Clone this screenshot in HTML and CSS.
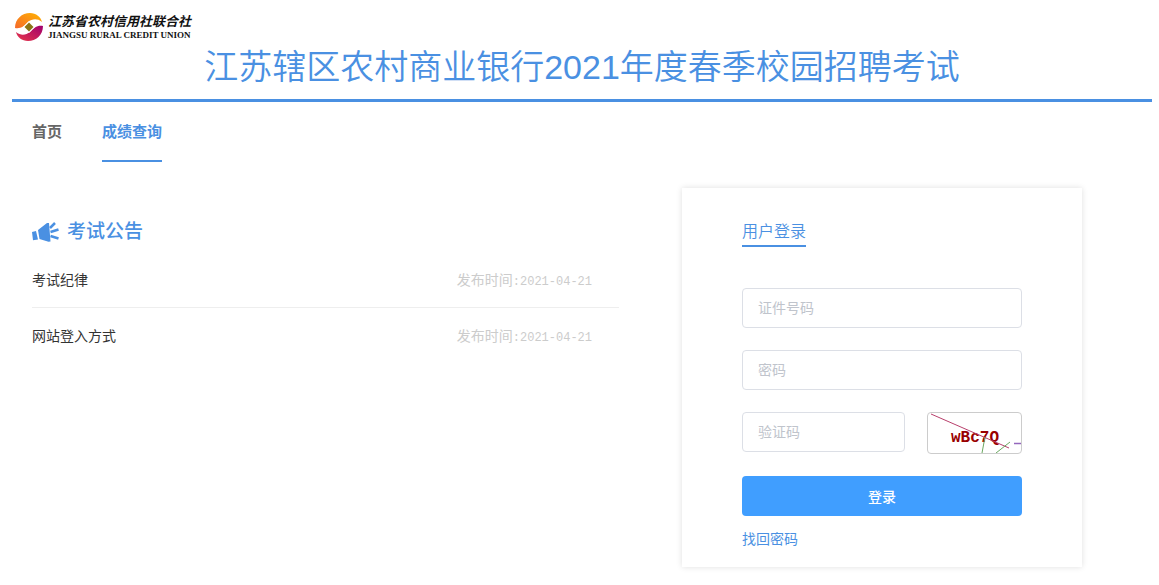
FILE: index.html
```html
<!DOCTYPE html>
<html lang="zh-CN">
<head>
    <meta charset="UTF-8">
    <meta name="viewport" content="width=device-width, initial-scale=1.0">
    <title>江苏辖区农村商业银行2021年度春季校园招聘考试</title>
    <link rel="stylesheet" href="styles.css">
</head>
<body>
    <header class="header">
        <div class="logo">
            <svg class="logo-mark" viewBox="0 0 28 28" aria-hidden="true">
                <defs>
                    <linearGradient id="orange" x1="0" y1="1" x2="1" y2="0">
                        <stop offset="0" stop-color="#f5692b"/>
                        <stop offset="1" stop-color="#ffb400"/>
                    </linearGradient>
                    <linearGradient id="purple" x1="0" y1="1" x2="1" y2="0">
                        <stop offset="0" stop-color="#e8384a"/>
                        <stop offset="1" stop-color="#a0006e"/>
                    </linearGradient>
                </defs>
                <path fill="url(#orange)" d="M0 15C0 6 7 0 15 0c6 0 11 4 12 9-5-4-10-3-14 0-4 4-7 7-13 6z"/>
                <path fill="url(#purple)" d="M28 13c0 9-7 15-15 15-6 0-11-4-12-9 5 4 10 3 14 0 4-4 7-7 13-6z"/>
                <path fill="#fff" d="M14 8l6 6-6 6-6-6z"/>
                <path fill="#8a7416" d="M14 9.500l4.500 4.500-4.500 4.500L9.500 14z"/>
            </svg>
            <div class="logo-text">
                <span class="logo-cn">江苏省农村信用社联合社</span>
                <span class="logo-en">JIANGSU RURAL CREDIT UNION</span>
            </div>
        </div>
        <h1>江苏辖区农村商业银行2021年度春季校园招聘考试</h1>
    </header>

    <nav class="nav">
        <a href="#">首页</a>
        <a href="#" class="active">成绩查询</a>
    </nav>

    <main class="main">
        <section class="notice">
            <h2>
                <svg class="horn" viewBox="0 0 27 20" aria-hidden="true">
                    <path d="M0 10l4-1 2 8.500-5 .8zM6 8L15 1l2 0 1.500 18.500-2 .3L7.500 17z"/>
                    <path d="M18 6l5-5M18.500 10l8-2.500M18.500 14l8 2.500" fill="none" stroke="#4a90e2" stroke-width="2.500"/>
                </svg>
                考试公告
            </h2>
            <ul class="notice-list">
                <li>
                    <a href="#">考试纪律</a>
                    <span class="date">发布时间<span class="num">:2021-04-21</span></span>
                </li>
                <li>
                    <a href="#">网站登入方式</a>
                    <span class="date">发布时间<span class="num">:2021-04-21</span></span>
                </li>
            </ul>
        </section>

        <form class="login">
            <h3>用户登录</h3>
            <input type="text" placeholder="证件号码" aria-label="证件号码">
            <input type="password" placeholder="密码" aria-label="密码">
            <div class="code-row">
                <input type="text" placeholder="验证码" aria-label="验证码">
                <svg class="captcha" viewBox="0 0 93 40">
                    <text x="23" y="29">wBc7Q</text>
                    <path d="M3 1l78 34" stroke="#b8406c"/>
                    <path d="M57 24l-3 16M68 40l14-11" stroke="#6aa860"/>
                    <path d="M86 30.500h7" stroke="#9467bd" stroke-width="1.500"/>
                </svg>
            </div>
            <button type="submit">登录</button>
            <a href="#" class="forgot">找回密码</a>
        </form>
    </main>
</body>
</html>
```
FILE: styles.css
```css
* {
    box-sizing: border-box;
}
body {
    margin: 0 7px 0 12px;
    font-family: "Liberation Sans", "Noto Sans CJK SC", sans-serif;
    font-size: 14px;
    color: #333;
    background: #fff;
}
a {
    color: inherit;
    text-decoration: none;
}
.header {
    padding-top: 12px;
    border-bottom: 3px solid #4a90e2;
}
.logo {
    display: flex;
    align-items: center;
    gap: 5px;
    height: 30px;
    padding-left: 3px;
}
.logo-mark {
    width: 28px;
    height: 28px;
}
.logo-text {
    display: flex;
    flex-direction: column;
    color: #111;
    white-space: nowrap;
}
.logo-cn {
    font-size: 13px;
    font-weight: bold;
    font-style: italic;
    line-height: 16px;
}
.logo-en {
    font-family: "Liberation Serif", serif;
    font-size: 9px;
    font-weight: bold;
    line-height: 10px;
}
h1 {
    margin: 0;
    font-size: 34px;
    font-weight: 350;
    line-height: 50px;
    padding-bottom: 7px;
    text-align: center;
    color: #4a90e2;
}
.nav {
    display: flex;
    gap: 40px;
    padding-left: 20px;
    font-size: 15px;
    font-weight: bold;
    color: #666;
}
.nav a {
    height: 60px;
    line-height: 60px;
    border-bottom: 2px solid transparent;
}
.nav .active {
    color: #4a90e2;
    border-color: #4a90e2;
}
.main {
    display: flex;
    align-items: flex-start;
    gap: 63px;
    padding: 26px 70px 18px 20px;
}
.notice {
    flex: 1;
    padding-top: 32px;
}
.notice h2 {
    display: flex;
    align-items: center;
    gap: 8px;
    margin: 0;
    font-size: 19px;
    font-weight: 500;
    line-height: 24px;
    color: #4a90e2;
}
.horn {
    width: 27px;
    height: 20px;
    fill: #4a90e2;
}
.notice-list {
    list-style: none;
    margin: 8px 0 0;
    padding: 0;
}
.notice-list li {
    display: flex;
    justify-content: space-between;
    height: 56px;
    padding-right: 27px;
    line-height: 56px;
    border-bottom: 1px solid #eee;
}
.notice-list li:last-child {
    border-bottom: none;
}
.date {
    color: #ccc;
}
.num {
    font-family: "Liberation Mono", monospace;
    font-size: 12px;
}
.login {
    display: flex;
    flex-direction: column;
    align-items: flex-start;
    width: 400px;
    padding: 30px 60px 17px;
    box-shadow: 0 0 6px rgba(0, 0, 0, 0.13);
}
.login h3 {
    margin: 0 0 41px;
    font-size: 16px;
    font-weight: 350;
    line-height: 27px;
    color: #4a90e2;
    border-bottom: 2px solid #4a90e2;
}
.login input {
    width: 100%;
    height: 40px;
    margin-bottom: 22px;
    padding: 0 15px;
    font: inherit;
    border: 1px solid #dcdfe6;
    border-radius: 4px;
    outline: none;
}
.login input::placeholder {
    color: #c0c4cc;
}
.code-row {
    display: flex;
    gap: 22px;
    width: 100%;
    margin-bottom: 2px;
}
.code-row input {
    flex: 1;
    min-width: 0;
}
.captcha {
    width: 95px;
    height: 42px;
    border: 1px solid #ccc;
    border-radius: 4px;
    fill: none;
}
.captcha text {
    font-family: "Liberation Mono", monospace;
    font-size: 16px;
    font-weight: bold;
    fill: #990000;
}
.login button {
    width: 100%;
    height: 40px;
    font: inherit;
    font-weight: 500;
    color: #fff;
    background: #409eff;
    border: none;
    border-radius: 4px;
    cursor: pointer;
}
.forgot {
    margin-top: 12px;
    line-height: 22px;
    color: #4a90e2;
}
```
